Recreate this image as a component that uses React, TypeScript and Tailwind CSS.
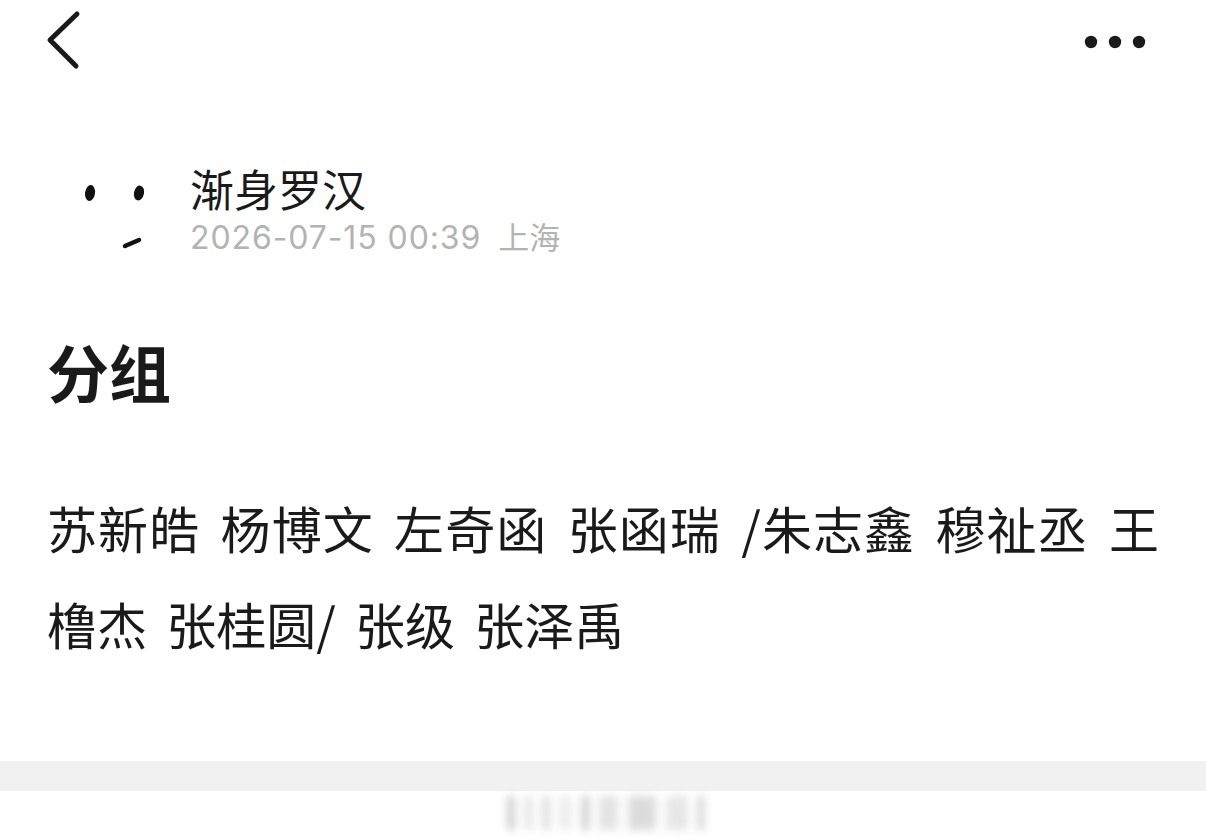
import React from "react";

const cjk = '"Noto Sans CJK SC", "Noto Sans", sans-serif';
const latin = 'Inter, "Noto Sans CJK SC", sans-serif';

function BackIcon() {
  return (
    <svg width="40" height="64" viewBox="0 0 40 64" fill="none">
      <path d="M31 4 L4 30 L30 56" stroke="#1a1a1a" strokeWidth="5" strokeLinecap="round" strokeLinejoin="round" />
    </svg>
  );
}

function MoreIcon() {
  return (
    <svg width="62" height="16" viewBox="0 0 62 16">
      <circle cx="7" cy="8" r="6.2" fill="#1a1a1a" />
      <circle cx="31" cy="8" r="6.2" fill="#1a1a1a" />
      <circle cx="55" cy="8" r="6.2" fill="#1a1a1a" />
    </svg>
  );
}

function Avatar() {
  return (
    <svg width="90" height="90" viewBox="0 0 90 90">
      <ellipse cx="20" cy="27" rx="5" ry="8" fill="#111" transform="rotate(8 20 27)" />
      <ellipse cx="69" cy="27" rx="5" ry="7.5" fill="#111" transform="rotate(12 69 27)" />
      <path d="M55 80 L69 74" stroke="#111" strokeWidth="4.5" strokeLinecap="round" />
    </svg>
  );
}

export default function App() {
  return (
    <div className="w-[1206px] h-[838px] bg-white overflow-hidden text-[#1a1a1a]" style={{ fontFamily: cjk }}>
      {/* top bar */}
      <div className="h-[84px] flex items-center justify-between pl-[46px] pr-[60px]">
        <BackIcon />
        <MoreIcon />
      </div>

      {/* author */}
      <div className="mt-[82px] flex items-start pl-[70px]">
        <Avatar />
        <div className="ml-[30px] flex flex-col">
          <div className="text-[44px] leading-[44px]" style={{ fontFamily: cjk }}>渐身罗汉</div>
          <div className="mt-[10px] text-[32px] leading-[32px] text-[#b3b3b3] flex items-baseline">
            <span className="tracking-[0.9px]" style={{ fontFamily: latin }}>2026-07-15 00:39</span>
            <span className="ml-[17px] text-[31px]" style={{ fontFamily: cjk }}>上海</span>
          </div>
        </div>
      </div>

      {/* title */}
      <h1 className="mt-[84px] px-[47px] text-[62px] leading-[62px] font-bold">分组</h1>

      {/* body */}
      <p className="mt-[77px] px-[47px] text-[50px] leading-[96px] text-justify [word-spacing:8px]">
        苏新皓 杨博文 左奇函 张函瑞 /朱志鑫 穆祉丞 王橹杰 张桂圆/ 张级 张泽禹
      </p>

      {/* divider band */}
      <div className="mt-[90px] h-[30px] bg-[#f1f1f1]" />

      {/* faded footer */}
      <div className="ml-[508px] mt-[5px] w-[196px] h-[34px] flex gap-[10px] items-stretch blur-[4px] opacity-60">
        <div className="w-[6px] bg-[#9a9a9a]" />
        <div className="w-[10px] bg-[#d8d8d8]" />
        <div className="w-[6px] bg-[#b8b8b8]" />
        <div className="w-[14px] bg-[#e2e2e2]" />
        <div className="w-[8px] bg-[#a8a8a8]" />
        <div className="w-[20px] bg-[#d0d0d0]" />
        <div className="w-[30px] bg-[#c4c4c4]" />
        <div className="w-[24px] bg-[#d6d6d6]" />
        <div className="w-[6px] bg-[#b0b0b0]" />
      </div>
    </div>
  );
}
